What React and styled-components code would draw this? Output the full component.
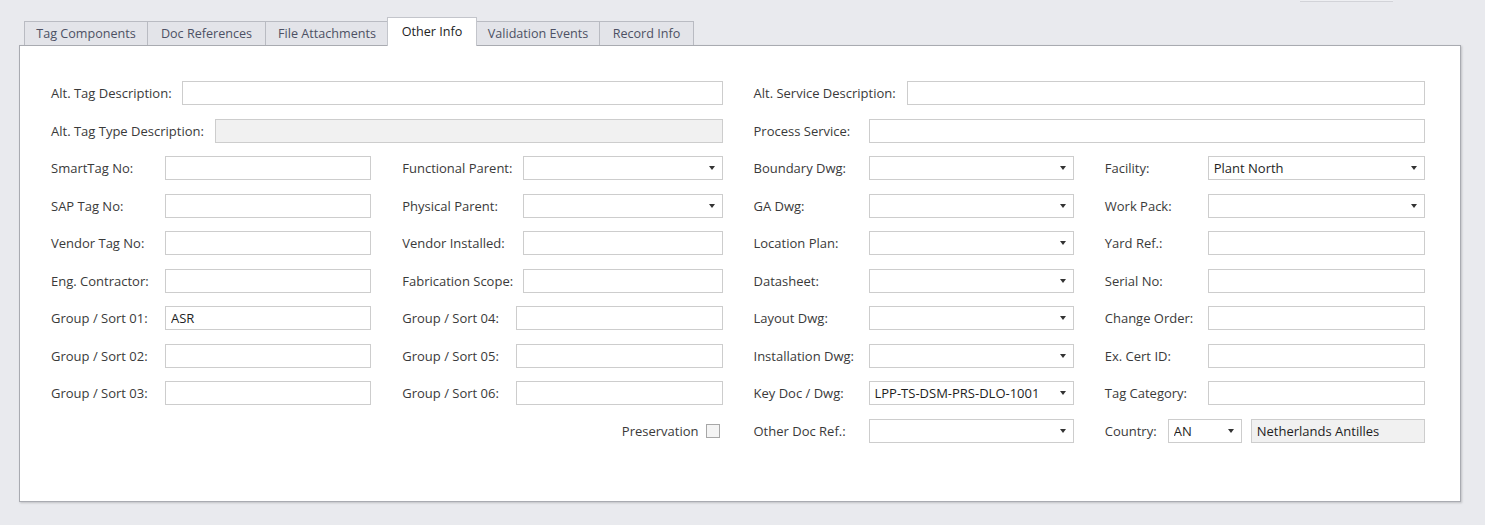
import React from "react";
import styled, { createGlobalStyle } from "styled-components";

const Global = createGlobalStyle`
  html, body { margin: 0; padding: 0; }
  body {
    background: #e9eaee;
    font-family: "Open Sans", "Noto Sans", "Liberation Sans", sans-serif;
    font-size: 13px;
    color: #333;
  }
`;

const Page = styled.div`
  width: 1485px;
  height: 525px;
  box-sizing: border-box;
  overflow: hidden;
  background: #e9eaee;
`;

const TopStrip = styled.div`
  height: 17px;
  display: flex;
  justify-content: flex-end;
  padding-right: 92px;
`;

const StubButton = styled.div`
  width: 93px;
  height: 1px;
  border-bottom: 1px solid #d2d3d8;
  background: #eeeff2;
`;

const TabBar = styled.div`
  display: flex;
  align-items: flex-end;
  padding-left: 24px;
  height: 28px;
  position: relative;
  z-index: 2;
`;

const Tab = styled.div`
  box-sizing: border-box;
  flex: 0 0 ${(p) => p.$w}px;
  height: ${(p) => (p.$active ? "29px" : "24px")};
  margin-bottom: ${(p) => (p.$active ? "-1px" : "0")};
  margin-left: ${(p) => (p.$active ? "-2px" : "-1px")};
  padding-bottom: ${(p) => (p.$active ? "2px" : "0")};
  display: flex;
  align-items: center;
  justify-content: center;
  background: ${(p) => (p.$active ? "#ffffff" : "#e3e4e9")};
  border: 1px solid ${(p) => (p.$active ? "#c3c5cb" : "#b9bbc2")};
  border-bottom: none;
  color: ${(p) => (p.$active ? "#222" : "#4d5164")};
  font-size: 12.6px;
  white-space: nowrap;
  position: relative;
  z-index: ${(p) => (p.$active ? 3 : 1)};
  &:first-child { margin-left: 0; }
`;

const Panel = styled.div`
  box-sizing: border-box;
  margin-left: 19px;
  width: 1442px;
  height: 457px;
  background: #fff;
  border: 1px solid #a9abb1;
  box-shadow: 1px 1px 2px rgba(0, 0, 0, 0.18);
  padding: 35px 35px 0 31px;
  display: flex;
  flex-direction: column;
  gap: 13.5px;
`;

const WideGrid = styled.div`
  display: grid;
  grid-template-columns: 1fr 1fr;
  column-gap: 31px;
  row-gap: 13.5px;
`;

const MainGrid = styled.div`
  display: grid;
  grid-template-columns: repeat(4, 1fr);
  grid-template-rows: repeat(8, 24px);
  grid-auto-flow: column;
  column-gap: 31px;
  row-gap: 13.5px;
`;

const Field = styled.div`
  display: flex;
  align-items: center;
  height: 24px;
  min-width: 0;
`;

const Label = styled.label`
  flex: 0 0 ${(p) => p.$w}px;
  white-space: nowrap;
  color: #3a3a3a;
  font-size: 13px;
  line-height: 24px;
`;

const Input = styled.div`
  flex: ${(p) => (p.$fixed ? `0 0 ${p.$fixed}px` : "1")};
  box-sizing: border-box;
  height: 24px;
  min-width: 0;
  border: 1px solid #cdcdcd;
  background: ${(p) => (p.$disabled ? "#f1f1f1" : "#fff")};
  display: flex;
  align-items: center;
  padding: 0 4px 0 5px;
  color: #1e1e1e;
  font-size: 13px;
  white-space: nowrap;
  overflow: hidden;
`;

const Value = styled.span`
  flex: 1;
  overflow: hidden;
`;

const Arrow = styled.span`
  width: 0;
  height: 0;
  border-left: 3.5px solid transparent;
  border-right: 3.5px solid transparent;
  border-top: 4px solid #333;
  margin-right: 3px;
  flex: none;
`;

const CheckRow = styled.div`
  display: flex;
  align-items: center;
  justify-content: flex-end;
  gap: 7px;
  height: 24px;
  color: #3a3a3a;
  padding-right: 3px;
`;

const Check = styled.span`
  width: 14px;
  height: 14px;
  box-sizing: border-box;
  border: 1px solid #a7a7a7;
  background: #f4f4f4;
`;

const Split = styled.div`
  flex: 1;
  display: flex;
  gap: 9px;
  min-width: 0;
`;

const Spacer = styled.div``;

function Text({ label, w, value, disabled }) {
  return (
    <Field>
      <Label $w={w}>{label}</Label>
      <Input $disabled={disabled}>
        <Value>{value}</Value>
      </Input>
    </Field>
  );
}

function Combo({ label, w, value }) {
  return (
    <Field>
      <Label $w={w}>{label}</Label>
      <Input>
        <Value>{value}</Value>
        <Arrow />
      </Input>
    </Field>
  );
}

const tabs = [
  { name: "Tag Components", w: 124 },
  { name: "Doc References", w: 119 },
  { name: "File Attachments", w: 124 },
  { name: "Other Info", w: 90, active: true },
  { name: "Validation Events", w: 124 },
  { name: "Record Info", w: 95 },
];

export default function App() {
  return (
    <Page>
      <Global />
      <TopStrip>
        <StubButton />
      </TopStrip>
      <TabBar>
        {tabs.map((t) => (
          <Tab key={t.name} $w={t.w} $active={t.active}>
            {t.name}
          </Tab>
        ))}
      </TabBar>
      <Panel>
        <WideGrid>
          <Text label="Alt. Tag Description:" w={131} />
          <Text label="Alt. Service Description:" w={153} />
          <Text label="Alt. Tag Type Description:" w={164} disabled />
          <Text label="Process Service:" w={115} />
        </WideGrid>
        <MainGrid>
          <Text label="SmartTag No:" w={114} />
          <Text label="SAP Tag No:" w={114} />
          <Text label="Vendor Tag No:" w={114} />
          <Text label="Eng. Contractor:" w={114} />
          <Text label="Group / Sort 01:" w={114} value="ASR" />
          <Text label="Group / Sort 02:" w={114} />
          <Text label="Group / Sort 03:" w={114} />
          <Spacer />

          <Combo label="Functional Parent:" w={121} />
          <Combo label="Physical Parent:" w={121} />
          <Text label="Vendor Installed:" w={121} />
          <Text label="Fabrication Scope:" w={121} />
          <Text label="Group / Sort 04:" w={114} />
          <Text label="Group / Sort 05:" w={114} />
          <Text label="Group / Sort 06:" w={114} />
          <CheckRow>
            Preservation <Check />
          </CheckRow>

          <Combo label="Boundary Dwg:" w={115} />
          <Combo label="GA Dwg:" w={115} />
          <Combo label="Location Plan:" w={115} />
          <Combo label="Datasheet:" w={115} />
          <Combo label="Layout Dwg:" w={115} />
          <Combo label="Installation Dwg:" w={115} />
          <Combo label="Key Doc / Dwg:" w={115} value="LPP-TS-DSM-PRS-DLO-1001" />
          <Combo label="Other Doc Ref.:" w={115} />

          <Combo label="Facility:" w={103} value="Plant North" />
          <Combo label="Work Pack:" w={103} />
          <Text label="Yard Ref.:" w={103} />
          <Text label="Serial No:" w={103} />
          <Text label="Change Order:" w={103} />
          <Text label="Ex. Cert ID:" w={103} />
          <Text label="Tag Category:" w={103} />
          <Field>
            <Label $w={63}>Country:</Label>
            <Split>
              <Input $fixed={74}>
                <Value>AN</Value>
                <Arrow />
              </Input>
              <Input $disabled>
                <Value>Netherlands Antilles</Value>
              </Input>
            </Split>
          </Field>
        </MainGrid>
      </Panel>
    </Page>
  );
}
